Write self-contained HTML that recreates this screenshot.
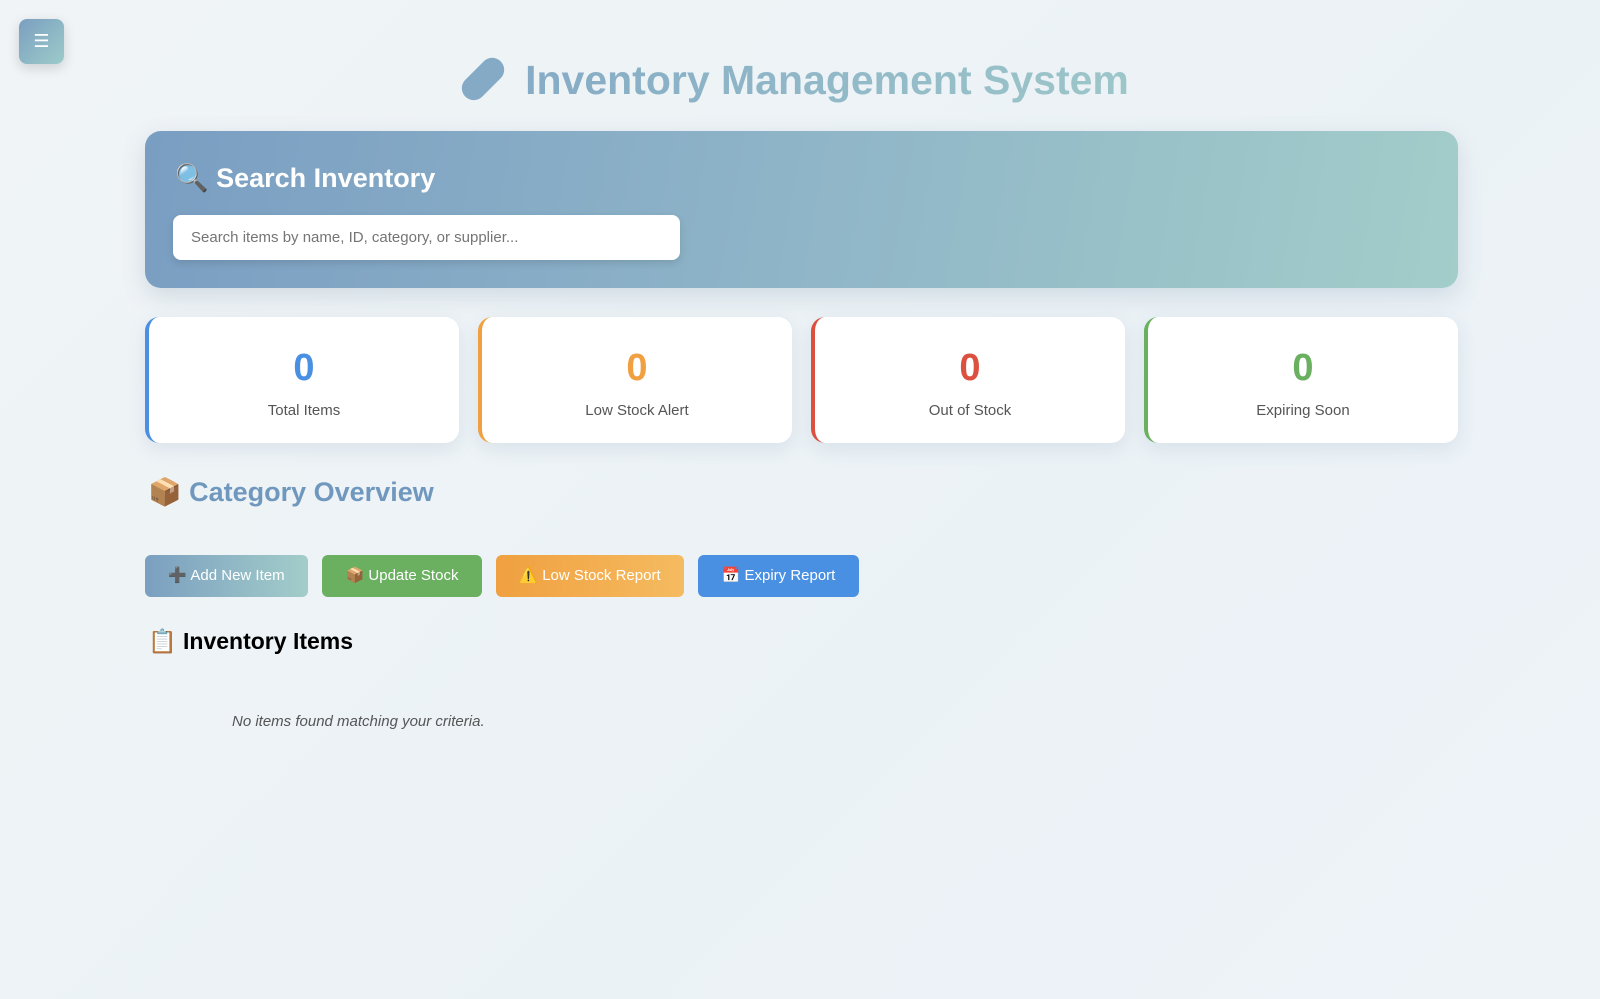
<!DOCTYPE html>
<html><head><meta charset="utf-8"><style>
*{box-sizing:border-box;margin:0;padding:0}
body{width:1600px;height:999px;overflow:hidden;font-family:"Liberation Sans","DejaVu Sans",sans-serif;background:linear-gradient(135deg,#f0f4f6,#ebf2f6 60%,#eef3f8);position:relative}
.menu{position:absolute;left:19px;top:19px;width:45px;height:45px;border-radius:8px;background:linear-gradient(135deg,#7b9fc0,#9ccbc9);box-shadow:0 4px 12px rgba(0,0,0,.15);color:#fff;font-size:18px;text-align:center;line-height:45px}
h1{position:absolute;left:0;width:1600px;top:54px;text-align:center;font-size:41px;font-weight:bold;color:#8ab1c8}
h1 .t{background:linear-gradient(90deg,#86abc6,#9dc6c9);-webkit-background-clip:text;color:transparent}
h1 .pill{display:inline-block;width:24px;height:50px;border-radius:12px;background:#85aac6;transform:rotate(45deg);vertical-align:-10px;margin-right:30px}
.search{position:absolute;left:145px;top:131px;width:1313px;height:157px;border-radius:16px;background:linear-gradient(100deg,#7a9ec2,#8fb5c8 50%,#a2cdc9);box-shadow:0 8px 24px rgba(90,120,150,.2)}
.search h2{position:absolute;left:30px;top:31px;color:#fff;font-size:27px;font-weight:bold}
.search input{position:absolute;left:28px;top:84px;width:507px;height:45px;border:none;border-radius:8px;padding-left:18px;font-size:15px;font-family:inherit;color:#666;box-shadow:0 3px 8px rgba(0,0,0,.12)}
.card{position:absolute;top:317px;width:314px;height:126px;background:#fff;border-radius:14px;box-shadow:0 6px 18px rgba(100,130,160,.14);text-align:center}
.card b{display:block;margin-top:29px;font-size:38px;line-height:44px}
.card span{display:block;margin-top:12px;font-size:15px;color:#555}
h3{position:absolute;font-weight:bold}
.btn{position:absolute;top:555px;height:42px;border-radius:6px;color:#fff;font-size:15px;line-height:42px;text-align:center}
</style></head><body>
<div class="menu">☰</div>
<h1><span class="pill"></span><span class="t">Inventory Management System</span></h1>
<div class="search"><h2>🔍 Search Inventory</h2><input placeholder="Search items by name, ID, category, or supplier..."></div>
<div class="card" style="left:145px;border-left:4px solid #4a90e2"><b style="color:#4a90e2">0</b><span>Total Items</span></div>
<div class="card" style="left:478px;border-left:4px solid #f0a040"><b style="color:#f0a040">0</b><span>Low Stock Alert</span></div>
<div class="card" style="left:811px;border-left:4px solid #dc5040"><b style="color:#dc5040">0</b><span>Out of Stock</span></div>
<div class="card" style="left:1144px;border-left:4px solid #6ab060"><b style="color:#6ab060">0</b><span>Expiring Soon</span></div>
<h3 style="left:148px;top:476px;font-size:27px;color:#7098be">📦 Category Overview</h3>
<div class="btn" style="left:145px;width:163px;background:linear-gradient(90deg,#7b9fc0,#a2cdc9)">➕ Add New Item</div>
<div class="btn" style="left:322px;width:160px;background:#6ab060">📦 Update Stock</div>
<div class="btn" style="left:496px;width:188px;background:linear-gradient(90deg,#f0a040,#f5bb60)">⚠️ Low Stock Report</div>
<div class="btn" style="left:698px;width:161px;background:#4a90e2">📅 Expiry Report</div>
<h3 style="left:148px;top:628px;font-size:23px;color:#000">📋 Inventory Items</h3>
<div style="position:absolute;left:232px;top:713px;font-style:italic;font-size:15px;color:#555">No items found matching your criteria.</div>
</body></html>
